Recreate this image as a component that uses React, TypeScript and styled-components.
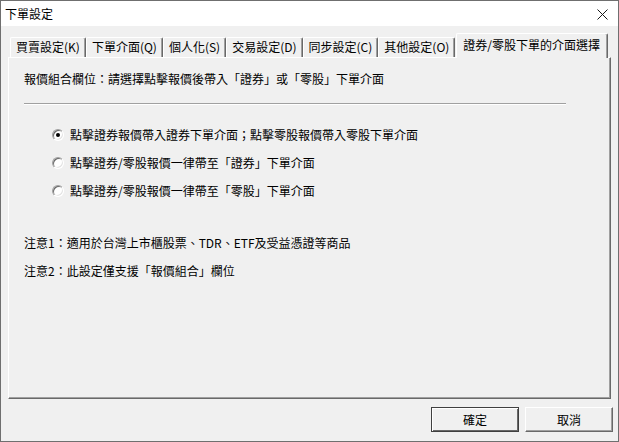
import React, { useState } from "react";
import styled, { createGlobalStyle } from "styled-components";

const GlobalStyle = createGlobalStyle`
  html, body {
    margin: 0;
    padding: 0;
    background: #f0f0f0;
  }
  body {
    font-family: "Noto Sans CJK TC", "Noto Sans", sans-serif;
    font-size: 12px;
    color: #000;
  }
`;

const tabs = [
  "買賣設定(K)",
  "下單介面(Q)",
  "個人化(S)",
  "交易設定(D)",
  "同步設定(C)",
  "其他設定(O)",
  "證券/零股下單的介面選擇",
];

const options = [
  "點擊證券報價帶入證券下單介面；點擊零股報價帶入零股下單介面",
  "點擊證券/零股報價一律帶至「證券」下單介面",
  "點擊證券/零股報價一律帶至「零股」下單介面",
];

const App = () => {
  const [active, setActive] = useState(6);
  const [choice, setChoice] = useState(0);

  return (
    <>
      <GlobalStyle />
      <Window>
        <TitleBar>
          <Title>下單設定</Title>
          <CloseButton aria-label="close">
            <svg width="11" height="11" viewBox="0 0 11 11">
              <path d="M0.5 0.5 L10.5 10.5 M10.5 0.5 L0.5 10.5" stroke="#1a1a1a" strokeWidth="1" />
            </svg>
          </CloseButton>
        </TitleBar>
        <Body>
          <TabStrip>
            {tabs.map((t, i) => (
              <Tab key={t} $active={i === active} onClick={() => setActive(i)}>
                {t}
              </Tab>
            ))}
          </TabStrip>
          <Panel>
            <Heading>報價組合欄位：請選擇點擊報價後帶入「證券」或「零股」下單介面</Heading>
            <Separator />
            <RadioList>
              {options.map((o, i) => (
                <RadioRow key={o} onClick={() => setChoice(i)}>
                  <RadioCircle $checked={i === choice} />
                  <span>{o}</span>
                </RadioRow>
              ))}
            </RadioList>
            <Notes>
              <Note>注意1：適用於台灣上市櫃股票、TDR、ETF及受益憑證等商品</Note>
              <Note>注意2：此設定僅支援「報價組合」欄位</Note>
            </Notes>
          </Panel>
          <Footer>
            <Button $default>確定</Button>
            <Button>取消</Button>
          </Footer>
        </Body>
      </Window>
    </>
  );
};

const Window = styled.div`
  width: 619px;
  height: 442px;
  box-sizing: border-box;
  border: 1px solid #6f6f6f;
  display: flex;
  flex-direction: column;
  background: #f0f0f0;
  overflow: hidden;
`;

const TitleBar = styled.div`
  height: 25px;
  background: #ffffff;
  display: flex;
  align-items: center;
  justify-content: space-between;
  padding: 0 10px 0 4px;
`;

const Title = styled.span`
  font-size: 12px;
  line-height: 16px;
  margin-top: 0px;
`;

const CloseButton = styled.div`
  width: 11px;
  height: 11px;
  display: flex;
  margin-top: 2px;
`;

const Body = styled.div`
  flex: 1;
  display: flex;
  flex-direction: column;
  padding: 0 6px 0 7px;
`;

const TabStrip = styled.div`
  height: 31px;
  display: flex;
  align-items: flex-end;
  padding-left: 2px;
`;

const Tab = styled.div<{ $active?: boolean }>`
  height: ${(p) => (p.$active ? 25 : 20)}px;
  box-sizing: border-box;
  padding: ${(p) => (p.$active ? "3px 7px 0 6px" : "1px 5px 0 5px")};
  line-height: 16px;
  white-space: nowrap;
  background: #f0f0f0;
  border-top: 1px solid #ffffff;
  border-left: 1px solid #ffffff;
  border-right: 1px solid #696969;
  box-shadow: inset -1px 0 0 #a0a0a0;
  border-top-left-radius: 2px;
  border-top-right-radius: 2px;
  margin-bottom: ${(p) => (p.$active ? -1 : 0)}px;
  margin-left: ${(p) => (p.$active ? 1 : 0)}px;
  position: relative;
  z-index: ${(p) => (p.$active ? 1 : 0)};
  cursor: default;
`;

const Panel = styled.div`
  width: 603px;
  height: 342px;
  box-sizing: border-box;
  border-top: 1px solid #ffffff;
  border-left: 1px solid #ffffff;
  border-right: 1px solid #696969;
  border-bottom: 1px solid #696969;
  box-shadow: inset -1px -1px 0 #a0a0a0;
  padding: 13px 16px 0 15px;
`;

const Heading = styled.div`
  line-height: 16px;
`;

const Separator = styled.div`
  width: 542px;
  height: 1px;
  margin-top: 16px;
  background: #a0a0a0;
  border-bottom: 1px solid #ffffff;
`;

const RadioList = styled.div`
  display: flex;
  flex-direction: column;
  gap: 12px;
  margin-top: 22px;
  padding-left: 28px;
`;

const RadioRow = styled.label`
  display: flex;
  align-items: center;
  gap: 6px;
  line-height: 16px;
  cursor: default;
`;

const RadioCircle = styled.span<{ $checked?: boolean }>`
  width: 12px;
  height: 12px;
  box-sizing: border-box;
  border-radius: 50%;
  background: #ffffff;
  border: 1px solid;
  border-color: #a0a0a0 #ffffff #ffffff #a0a0a0;
  box-shadow: inset 1px 1px 0 #696969, inset -1px -1px 0 #e3e3e3;
  display: flex;
  align-items: center;
  justify-content: center;

  &::after {
    content: "";
    width: 4px;
    height: 4px;
    border-radius: 50%;
    background: ${(p) => (p.$checked ? "#000" : "transparent")};
  }
`;

const Notes = styled.div`
  display: flex;
  flex-direction: column;
  gap: 12px;
  margin-top: 36px;
`;

const Note = styled.div`
  line-height: 16px;
`;

const Footer = styled.div`
  display: flex;
  justify-content: flex-end;
  gap: 6px;
  padding-top: 8px;
  margin-right: -1px;
`;

const Button = styled.button<{ $default?: boolean }>`
  width: 88px;
  height: 25px;
  box-sizing: border-box;
  font-family: inherit;
  font-size: 12px;
  color: #000;
  background: #f0f0f0;
  padding: 0;
  border: 1px solid;
  border-color: ${(p) =>
    p.$default ? "#404040" : "#ffffff #696969 #696969 #ffffff"};
  box-shadow: ${(p) =>
    p.$default
      ? "inset 1px 1px 0 #ffffff, inset -1px -1px 0 #696969"
      : "inset -1px -1px 0 #a0a0a0"};
`;

export default App;
